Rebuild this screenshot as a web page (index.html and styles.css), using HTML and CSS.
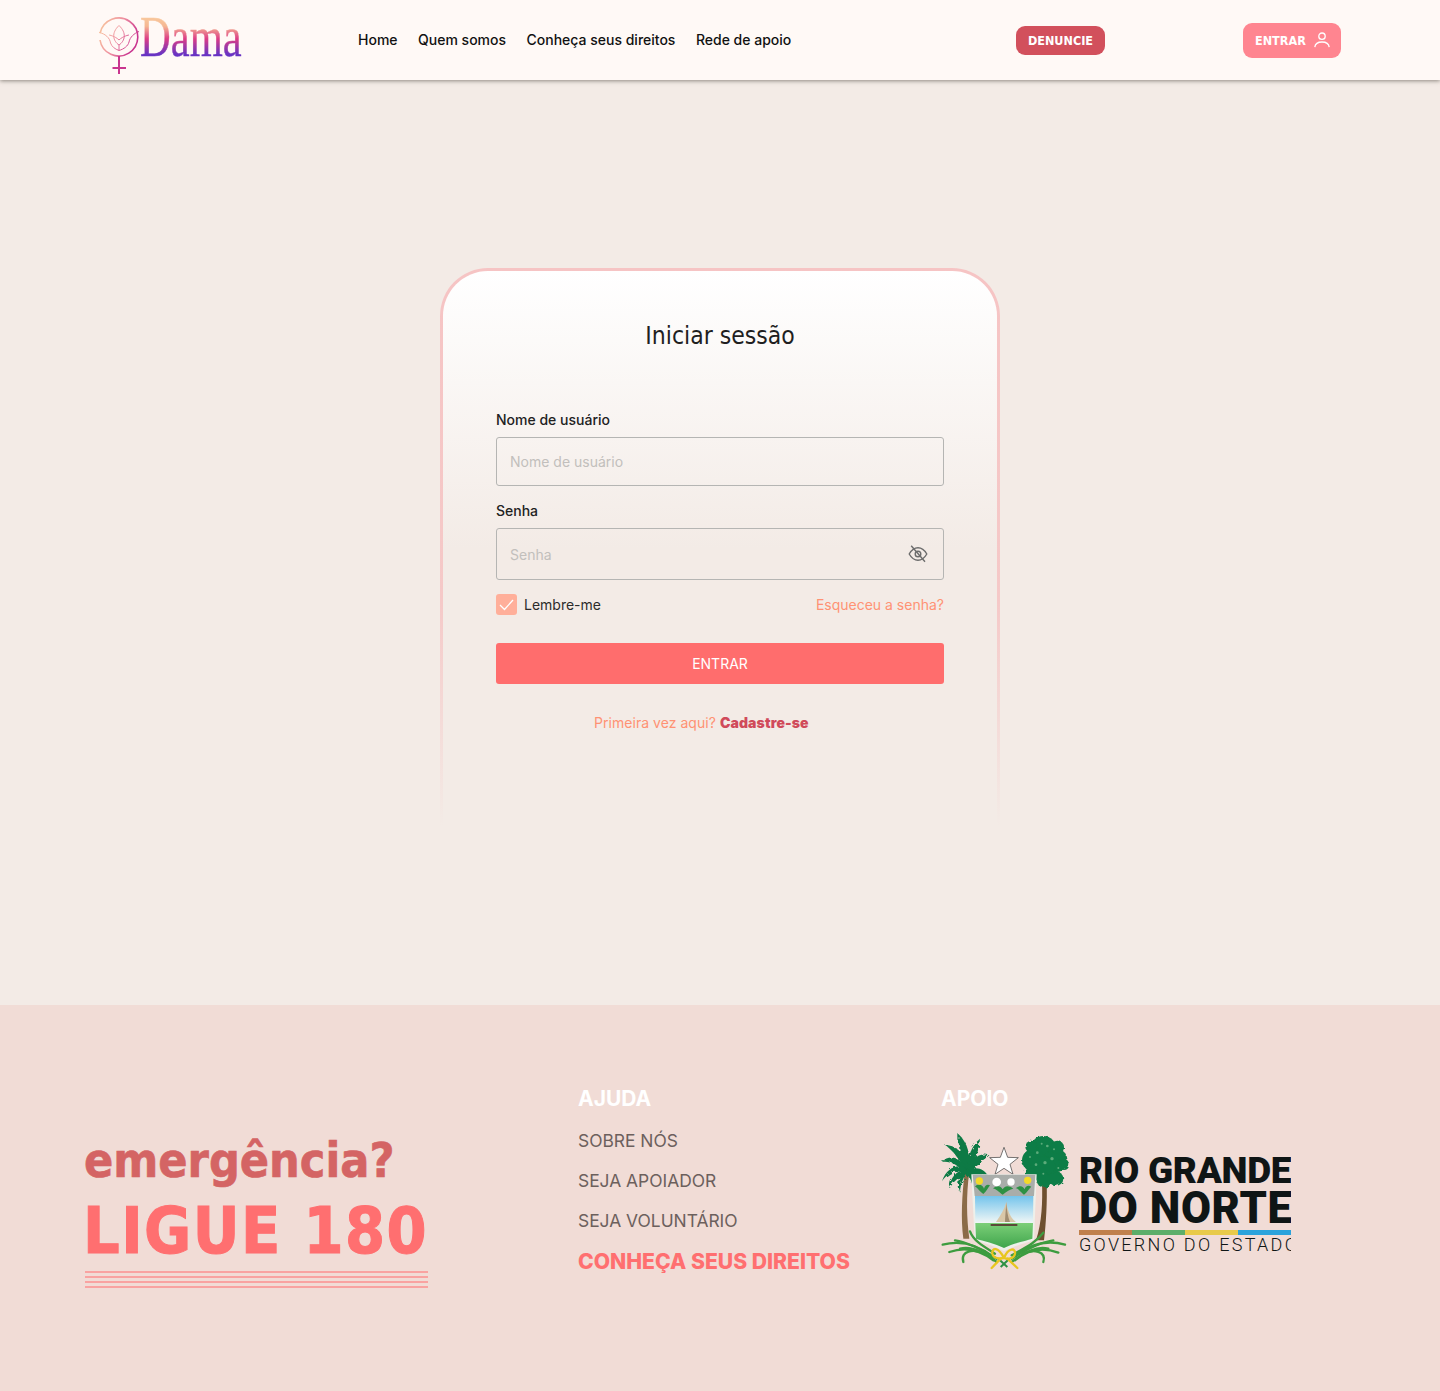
FILE: index.html
```html
<!DOCTYPE html>
<html lang="pt-BR">
<head>
<meta charset="utf-8">
<title>Dama</title>
<link rel="stylesheet" href="styles.css">
</head>
<body>
<header class="topbar">
  <a class="brand" href="#">
    <svg class="brand-mark" viewBox="0 0 46 60" aria-hidden="true">
      <defs>
        <linearGradient id="ring" x1="0" y1="0" x2="1" y2="0.4"><stop offset="0" stop-color="#f9cb9c"/><stop offset=".55" stop-color="#ee8fa0"/><stop offset="1" stop-color="#c9358f"/></linearGradient>
      </defs>
      <path d="M3.2 17A19 19 0 1 1 3 24" fill="none" stroke="url(#ring)" stroke-width="1.6"/>
      <path d="M2 16.500C8 17.500 13 22 13.500 27C15 31 18 33 22 34.500L22 29C16 25 14 17 22 9.500C30 17 28 25 22 29M22 34.500C27 33 31 30 32 26C33 21 37 17.500 42 15.500M22 24C18 20 12 19 12 19M22 24C26 20 32 19 32 19" fill="none" stroke="url(#ring)" stroke-width="1"/>
      <path d="M22 40V58M15.500 52H29" fill="none" stroke="#c9358f" stroke-width="2"/>
    </svg>
    <span class="brand-name">Dama</span>
  </a>
  <nav class="mainnav">
    <a href="#">Home</a>
    <a href="#">Quem somos</a>
    <a href="#">Conheça seus direitos</a>
    <a href="#">Rede de apoio</a>
  </nav>
  <a class="btn-report" href="#">DENUNCIE</a>
  <a class="btn-login" href="#">ENTRAR
    <svg class="user-icon" viewBox="0 0 18 18" aria-hidden="true"><circle cx="9" cy="5.200" r="3.200"/><path d="M1.800 16.200C2.200 12.800 5 11 9 11S15.800 12.800 16.200 16.200"/></svg>
  </a>
</header>

<main class="content">
  <section class="card-frame">
    <form class="card">
      <h1 class="card-title">Iniciar sessão</h1>
      <label class="field-label" for="user">Nome de usuário</label>
      <input class="text-input" id="user" placeholder="Nome de usuário">
      <label class="field-label field-label-second" for="pass">Senha</label>
      <div class="password-box">
        <input class="password-input" id="pass" placeholder="Senha">
        <svg class="eye-icon" viewBox="0 0 20 20" aria-hidden="true"><path d="M1.200 10C3.600 5.800 6.600 3.700 10 3.700S16.400 5.800 18.800 10C16.400 14.200 13.400 16.300 10 16.300S3.600 14.200 1.200 10Z"/><circle cx="10" cy="10" r="2.800"/><path d="M3.200 1.800L17 17.800"/></svg>
      </div>
      <div class="options">
        <span class="remember"><span class="check"><svg viewBox="0 0 21 21" aria-hidden="true"><path d="M4 11L8.500 15.500L17 6"/></svg></span>Lembre-me</span>
        <a class="forgot" href="#">Esqueceu a senha?</a>
      </div>
      <button class="submit" type="button">ENTRAR</button>
      <p class="signup">Primeira vez aqui? <a href="#">Cadastre-se</a></p>
    </form>
  </section>
</main>

<footer class="footer">
  <div class="emergency">
    <p class="em-question">emergência?</p>
    <p class="em-call">LIGUE 180</p>
    <div class="em-lines"><span></span><span></span><span></span><span></span></div>
  </div>
  <div class="help">
    <h2 class="foot-title">AJUDA</h2>
    <a class="foot-link" href="#">SOBRE NÓS</a>
    <a class="foot-link" href="#">SEJA APOIADOR</a>
    <a class="foot-link" href="#">SEJA VOLUNTÁRIO</a>
    <a class="foot-link foot-link-strong" href="#">CONHEÇA SEUS DIREITOS</a>
  </div>
  <div class="support">
    <h2 class="foot-title">APOIO</h2>
    <div class="gov">
      <svg class="crest" viewBox="30 20 390 420" aria-hidden="true">
        <defs>
          <linearGradient id="sky" x1="0" y1="0" x2="0" y2="1"><stop offset="0" stop-color="#74c4ec"/><stop offset="1" stop-color="#f4f8f6"/></linearGradient>
          <linearGradient id="sea" x1="0" y1="0" x2="0" y2="1"><stop offset="0" stop-color="#7ccf78"/><stop offset="1" stop-color="#3fa54c"/></linearGradient>
          <filter id="rough" x="-10%" y="-10%" width="120%" height="120%"><feTurbulence type="fractalNoise" baseFrequency=".09" numOctaves="2" seed="4"/><feDisplacementMap in="SourceGraphic" scale="14"/></filter>
        </defs>
        <path d="M100 340C92 280 96 210 104 140L118 140C108 210 110 280 118 340Z" fill="#8b6b48"/>
        <path d="M318 345C336 290 338 230 336 170L350 170C352 230 348 295 342 345Z" fill="#6e5030"/>
        <g fill="#0b7a45" filter="url(#rough)">
          <path d="M108 140C92 100 84 60 85 26C112 50 126 95 116 140Z"/>
          <path d="M106 140C113 95 125 60 150 40C146 78 134 115 116 146Z"/>
          <path d="M106 136C125 98 150 80 178 90C156 106 134 128 114 150Z"/>
          <path d="M106 140C130 122 162 124 176 156C150 146 130 150 112 156Z"/>
          <path d="M110 140C85 100 70 75 45 60C80 58 110 90 118 138Z"/>
          <path d="M110 142C80 118 60 106 36 110C60 82 100 100 116 136Z"/>
          <path d="M110 142C80 134 55 140 36 168C52 120 95 112 116 136Z"/>
          <path d="M108 146C88 154 68 168 58 192C58 156 85 128 116 134Z"/>
          <path d="M110 140C102 156 92 172 90 200C78 165 90 140 108 130Z"/>
          <path d="M108 140C120 155 128 172 130 198C142 165 128 142 112 130Z"/>
        </g>
        <g fill="#0f7d46" filter="url(#rough)">
          <circle cx="340" cy="72" r="40"/><circle cx="310" cy="105" r="34"/><circle cx="376" cy="105" r="36"/><circle cx="340" cy="130" r="38"/><circle cx="304" cy="64" r="18"/><circle cx="382" cy="66" r="20"/><circle cx="402" cy="118" r="16"/><circle cx="378" cy="160" r="22"/><circle cx="302" cy="148" r="20"/><circle cx="342" cy="165" r="22"/>
        </g>
        <g fill="#5cab7a">
          <circle cx="322" cy="82" r="4"/><circle cx="352" cy="62" r="4"/><circle cx="366" cy="100" r="5"/><circle cx="318" cy="118" r="4"/><circle cx="345" cy="112" r="5"/><circle cx="385" cy="128" r="3"/><circle cx="300" cy="95" r="3"/><circle cx="335" cy="55" r="3"/><circle cx="372" cy="72" r="3"/><circle cx="340" cy="145" r="3"/>
        </g>
        <path d="M222 66L233 96L265 97L240 117L249 147L222 129L195 147L204 117L179 97L211 96Z" fill="#fff" stroke="#333" stroke-width="2"/>
        <path d="M124 147H320L312 345C290 352 255 360 222 378C190 360 155 352 134 345Z" fill="#eef0ea"/>
        <path d="M128 148H316L312 212H134Z" fill="#a9adaa"/>
        <path d="M135 212H310L309 295H136Z" fill="url(#sky)"/>
        <path d="M136 293H309L307 340C285 347 250 354 222 368C195 354 160 347 138 340Z" fill="url(#sea)"/>
        <path d="M229 229C232 250 238 275 258 290H198C212 270 224 250 229 229Z" fill="#d9c7a8"/>
        <path d="M229 229C230 255 234 275 240 290H225C226 265 228 250 229 229Z" fill="#a08c70"/>
        <path d="M182 296H262V302H182Z" fill="#5c4a38"/>
        <g fill="#2d9144">
          <path d="M160 206C146 196 138 182 134 184C148 170 160 182 162 190C165 180 172 176 180 180C174 188 170 198 160 206Z"/>
          <path d="M218 208C205 198 192 186 188 190C205 176 214 185 218 192C222 185 232 176 250 190C240 192 230 198 218 208Z"/>
          <path d="M282 208C270 198 260 184 256 190C272 176 280 185 284 192C286 182 295 178 304 184C297 190 292 200 282 208Z"/>
        </g>
        <circle cx="148" cy="167" r="11" fill="#f4d92a"/><circle cx="293" cy="165" r="11" fill="#f4d92a"/>
        <circle cx="200" cy="170" r="13" fill="#fff"/><circle cx="243" cy="170" r="11" fill="#fff"/>
        <g fill="none" stroke="#3d9c3f" stroke-width="7" stroke-linecap="round">
          <path d="M38 358C90 345 140 355 190 395"/><path d="M58 380C100 365 145 370 190 405"/><path d="M100 410C90 375 130 370 165 385"/><path d="M120 318C130 345 155 360 195 385"/>
          <path d="M405 358C350 342 300 355 250 395"/><path d="M385 382C340 365 295 372 255 405"/><path d="M340 410C350 378 310 370 280 385"/><path d="M340 322C320 350 290 365 245 390"/>
          <path d="M75 345C110 350 160 375 200 400"/><path d="M370 345C330 350 285 375 245 400"/>
          <path d="M90 370C120 362 160 378 200 410"/><path d="M355 370C325 362 285 378 245 410"/>
        </g>
        <path d="M205 400L232 425M238 400L212 425" fill="none" stroke="#2d9144" stroke-width="6"/>
        <g fill="none" stroke="#e8c61f" stroke-width="7" stroke-linecap="round">
          <path d="M222 398C205 365 185 365 187 385C190 402 210 400 222 398C235 365 258 368 255 385C252 402 232 402 222 398"/>
          <path d="M212 400L185 428M232 400L262 428"/>
        </g>
      </svg>
      <div class="gov-text">
        <span class="gov-line1">RIO GRANDE</span>
        <span class="gov-line2">DO NORTE</span>
        <span class="gov-stripes"><i class="s1"></i><i class="s2"></i><i class="s3"></i><i class="s4"></i></span>
        <span class="gov-line3">GOVERNO DO ESTADO</span>
      </div>
    </div>
  </div>
</footer>
</body>
</html>
```
FILE: styles.css
```css
* { box-sizing: border-box; }
html, body { margin: 0; padding: 0; }
body { font-family: Inter, "Liberation Sans", sans-serif; background: #f3ebe6; color: #1c1c1c; }
a { text-decoration: none; color: inherit; }
p, h1, h2 { margin: 0; }

/* Header */
.topbar { height: 80px; background: #fff9f6; box-shadow: 0 1px 4px rgba(60, 55, 45, .55); display: flex; align-items: center; padding-left: 99px; position: relative; }
.brand { display: flex; width: 259px; height: 80px; position: relative; }
.brand-mark { width: 46px; height: 60px; margin: 16px 0 0 -2px; flex: none; }
.brand-name { font-family: "Liberation Serif", serif; font-size: 56px; line-height: 40px; height: 42px; margin: 17px 0 0 -3px; transform: scaleX(.76); transform-origin: 0 0; background: linear-gradient(180deg, #f9c99d 0%, #f5b792 22%, #dc3d86 52%, #6a33c2 88%, #5f30c6 100%); -webkit-background-clip: text; background-clip: text; color: transparent; -webkit-text-stroke: .4px transparent; }
.mainnav { display: flex; gap: 20.500px; font-size: 14px; line-height: 18px; font-weight: 450; color: #111; width: 658px; }
.btn-report { width: 89px; height: 29px; border-radius: 9px; background: #d2505c; color: #fff; font-family: "DejaVu Sans Condensed", "DejaVu Sans", sans-serif; font-stretch: condensed; font-weight: 700; font-size: 12.500px; display: flex; align-items: center; justify-content: center; }
.btn-login { width: 98px; height: 35px; margin-left: 138px; border-radius: 9px; background: #ff8590; color: #fff; font-family: "DejaVu Sans Condensed", "DejaVu Sans", sans-serif; font-stretch: condensed; font-weight: 700; font-size: 12.500px; display: flex; align-items: center; padding-left: 12px; gap: 7px; }
.user-icon { width: 18px; height: 18px; fill: none; stroke: #fff; stroke-width: 1.300; }

/* Login card */
.content { height: 925px; padding-top: 188px; display: flex; justify-content: center; }
.card-frame { width: 560px; height: 558px; padding: 3px 3px 0; border-radius: 48px 48px 0 0; background: linear-gradient(180deg, #f6c4c4 0%, #f5c9c8 60%, rgba(245, 201, 200, 0) 100%); }
.card { height: 100%; border-radius: 45px 45px 0 0; padding: 0 53px; background: linear-gradient(180deg, #fff 0%, #f3ebe6 50%); display: flex; flex-direction: column; }
.card-title { font-family: "DejaVu Sans Condensed", "DejaVu Sans", sans-serif; font-stretch: condensed; font-weight: 400; font-size: 24.500px; line-height: 30px; text-align: center; margin: 50px 0 59px; color: #1f1f1f; }
.field-label { font-size: 14px; font-weight: 450; line-height: 20px; margin-bottom: 7px; color: #222; }
.field-label-second { margin-top: 15px; }
.text-input, .password-box { width: 448px; border: 1px solid #b5b5b3; border-radius: 3px; background: transparent; }
.text-input { height: 49px; padding: 0 13px; font: 14px Inter, sans-serif; outline: 0; }
.password-box { height: 52px; display: flex; align-items: center; padding: 0 15px 0 13px; }
.password-input { flex: 1; min-width: 0; border: 0; background: transparent; padding: 0; font: 14px Inter, sans-serif; outline: 0; }
input::placeholder { color: #c2bfbc; opacity: 1; }
.eye-icon { width: 20px; height: 20px; fill: none; stroke: #6c6c6c; stroke-width: 1.400; }
.options { display: flex; justify-content: space-between; align-items: center; margin-top: 14px; height: 21px; font-size: 14px; }
.remember { display: flex; align-items: center; gap: 7px; color: #2b2b2b; }
.check { width: 21px; height: 21px; border-radius: 3px; background: #ffaf9a; display: block; }
.check svg { display: block; width: 21px; height: 21px; fill: none; stroke: #fff; stroke-width: 1.300; }
.forgot { color: #ff9274; }
.submit { height: 41px; margin-top: 28px; border: 0; border-radius: 3px; background: #ff6d6d; color: #fff; font: 14px Inter, sans-serif; }
.signup { margin-top: 29px; font-size: 14px; line-height: 20px; color: #ff9274; text-align: left; padding-left: 98px; letter-spacing: .04px; }
.signup a { color: #d04a5a; font-weight: 900; letter-spacing: .12px; }

/* Footer */
.footer { height: 386px; background: #f1dcd6; display: grid; grid-template-columns: 493px 363px 1fr; padding-left: 85px; }
.emergency { padding-top: 123px; }
.em-question { font-family: "DejaVu Sans Condensed", "DejaVu Sans", sans-serif; font-stretch: condensed; font-weight: 700; font-size: 48px; line-height: 64px; color: #d46464; -webkit-text-stroke: .6px #d46464; margin-left: -1px; }
.em-call { font-family: "DejaVu Sans Condensed", "DejaVu Sans", sans-serif; font-stretch: condensed; font-weight: 700; font-size: 64px; line-height: 78px; color: #ff6f70; letter-spacing: 1.500px; -webkit-text-stroke: 1px #ff6f70; margin-left: -2px; }
.em-lines { width: 343px; margin-top: 1px; display: flex; flex-direction: column; gap: 3px; }
.em-lines span { height: 2px; background: #f9a3a1; }
.help { padding-top: 81px; display: flex; flex-direction: column; align-items: flex-start; }
.foot-title { font-size: 21px; font-weight: 700; line-height: 26px; color: #fff; }
.foot-link { font-size: 17.400px; line-height: 24px; margin-top: 16px; color: #6c605d; }
.help .foot-title + .foot-link { margin-top: 17px; }
.foot-link-strong { font-size: 21.150px; font-weight: 800; color: #ff6f70; line-height: 26px; }
.support { padding-top: 81px; }
.gov { display: flex; margin-top: 20px; margin-left: -1px; }
.crest { width: 130px; height: 140px; flex: none; }
.gov-text { width: 212px; margin-left: 9px; padding-top: 21px; overflow: hidden; display: flex; flex-direction: column; font-family: Roboto, sans-serif; color: #0f1515; white-space: nowrap; }
.gov-line1 { font-size: 37px; font-weight: 900; line-height: 36px; letter-spacing: -.3px; }
.gov-line2 { font-size: 43.500px; font-weight: 900; line-height: 39px; letter-spacing: .6px; }
.gov-stripes { display: flex; height: 5px; width: 212px; margin-top: 2px; }
.gov-stripes i { flex: 1; }
.s1 { background: #c0804c; } .s2 { background: #5cae6a; } .s3 { background: #e8ca4a; } .s4 { background: #2ba3dc; }
.gov-line3 { font-size: 18px; font-weight: 300; line-height: 20px; letter-spacing: 2.300px; }
```
